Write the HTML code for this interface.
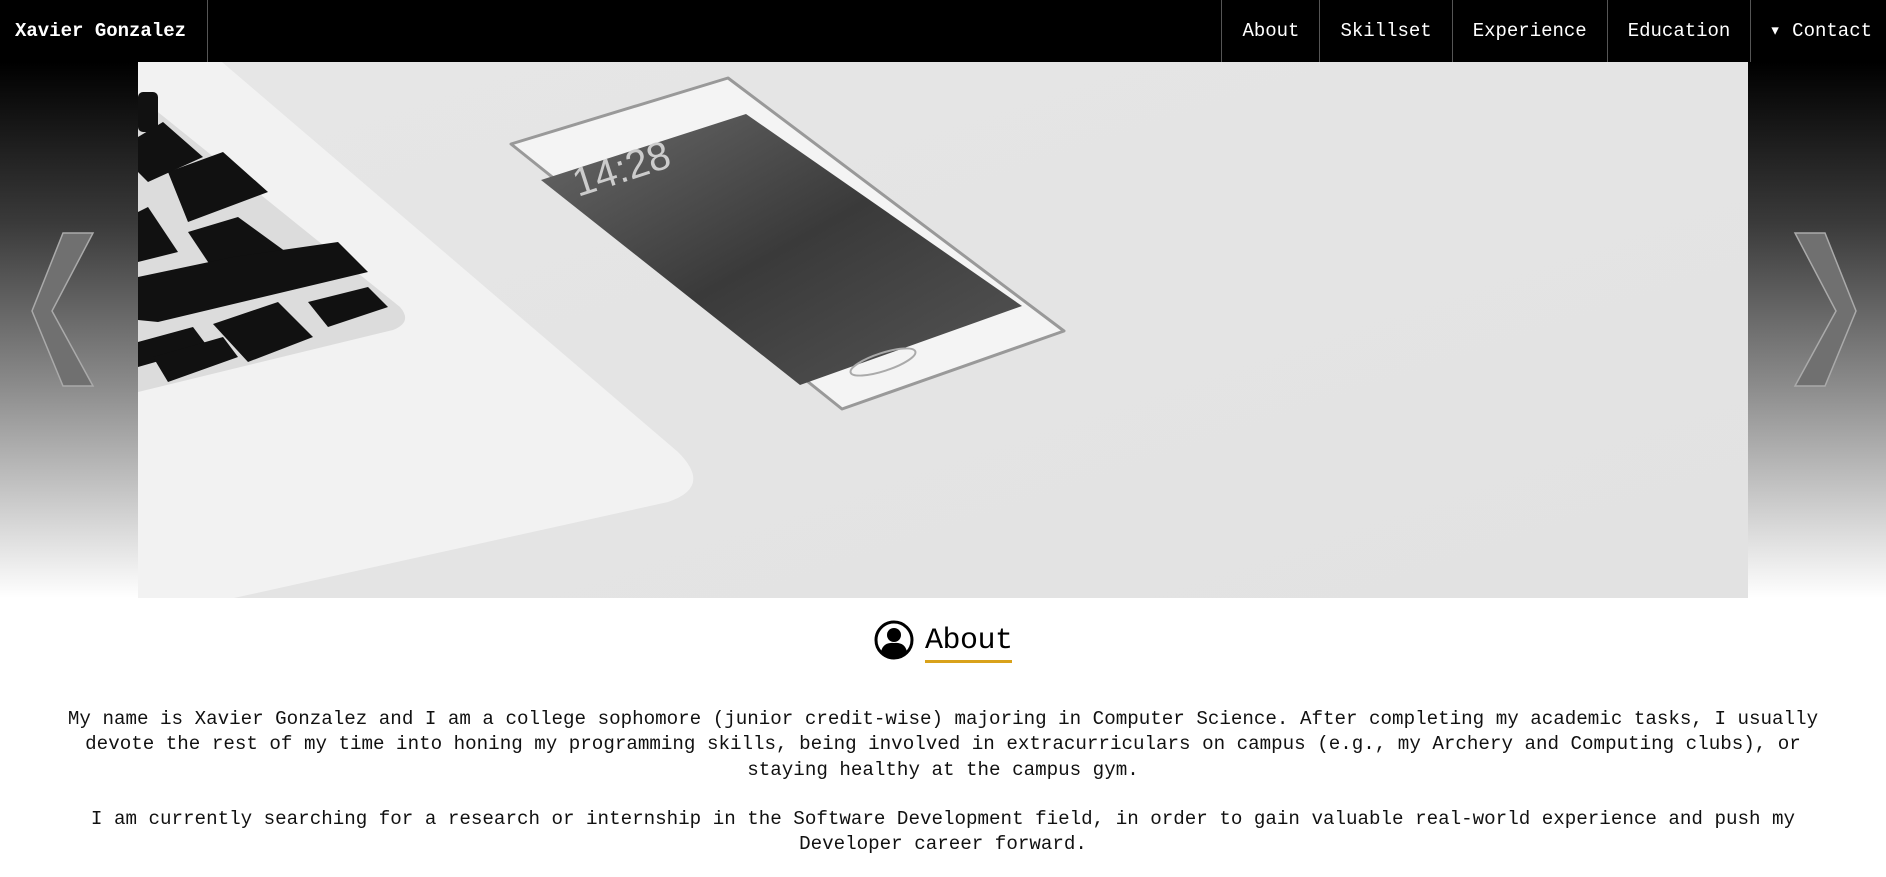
<!DOCTYPE html>
<html><head><meta charset="utf-8"><style>
*{margin:0;padding:0;box-sizing:border-box}
body{width:1886px;height:877px;overflow:hidden;background:#fff;font-family:"Liberation Mono",monospace}
nav{position:absolute;left:0;top:0;width:1886px;height:62px;background:#000;color:#fff;font-size:19px}
.brand{position:absolute;left:0;top:0;width:208px;height:62px;border-right:1px solid #555;font-weight:bold;line-height:62px;padding-left:15px}
.links{position:absolute;right:0;top:0;height:62px;display:flex}
.links a{display:block;height:62px;line-height:62px;padding:0 20px;color:#fff;text-decoration:none;border-left:1px solid #555}
.hero{position:absolute;left:0;top:62px;width:1886px;height:536px;background:linear-gradient(#000 0%,#3a3a3a 30%,#8a8a8a 60%,#fff 100%)}
.img{position:absolute;left:138px;top:0}
h2{position:absolute;left:925px;top:623px;font-size:30px;font-weight:normal;line-height:36px;border-bottom:3px solid #d9a21b;width:87px;height:40px;letter-spacing:-0.5px}
.icon{position:absolute;left:874px;top:620px}
p{position:absolute;left:0;width:1886px;text-align:center;font-size:19.2px;line-height:25.3px;color:#111;white-space:nowrap}
</style></head><body>
<nav><div class="brand">Xavier Gonzalez</div>
<div class="links"><a>About</a><a>Skillset</a><a>Experience</a><a>Education</a><a style="padding-left:18px;padding-right:14px">&#9662; Contact</a></div></nav>
<div class="hero">
<svg style="position:absolute;left:30px;top:169px" width="70" height="160" viewBox="0 0 70 160">
<polygon points="33,2 63,2 22,80 63,155 33,155 2,80" fill="#707070" stroke="#aaa" stroke-width="1.5"/></svg>
<svg style="position:absolute;left:1788px;top:169px" width="70" height="160" viewBox="0 0 70 160">
<polygon points="37,2 7,2 48,80 7,155 37,155 68,80" fill="#707070" stroke="#aaa" stroke-width="1.5"/></svg>
<svg class="img" width="1610" height="536" viewBox="0 0 1610 536">
<defs><linearGradient id="bg" x1="0" y1="0" x2="1" y2="1"><stop offset="0" stop-color="#e6e6e6"/><stop offset="1" stop-color="#e2e2e2"/></linearGradient>
<linearGradient id="sc" x1="0" y1="0" x2="1" y2="1"><stop offset="0" stop-color="#6a6a6a"/><stop offset="0.5" stop-color="#3a3a3a"/><stop offset="1" stop-color="#555"/></linearGradient></defs>
<rect width="1610" height="536" fill="url(#bg)"/>
<path d="M0,0 L84,0 L540,390 Q575,425 530,440 L96,536 L0,536 Z" fill="#f2f2f2"/>
<path d="M0,34 L262,245 Q275,260 255,268 L0,330 Z" fill="#dcdcdc"/>
<g fill="#111">
<rect x="0" y="30" width="20" height="40" rx="5"/>
<polygon points="0,75 25,60 65,95 10,120 0,110"/>
<polygon points="30,110 85,90 130,130 50,160"/>
<polygon points="0,150 10,145 40,190 0,200"/>
<polygon points="50,170 100,155 155,195 80,215"/>
<polygon points="0,215 95,195 200,180 230,210 20,260 0,258"/>
<polygon points="75,262 140,240 175,275 110,300"/>
<polygon points="170,240 230,225 250,245 190,265"/>
<polygon points="0,280 55,265 70,285 0,305"/>
<polygon points="15,295 85,275 100,295 30,320"/>
</g>
<polygon points="373,82 590,16 926,269 704,347" fill="#f4f4f4" stroke="#999" stroke-width="3" stroke-linejoin="round"/>
<polygon points="403,118 608,52 884,244 662,323" fill="url(#sc)"/>
<text x="440" y="135" fill="#ccc" font-size="40" font-family="Liberation Sans" transform="rotate(-18 440 135)">14:28</text>
<ellipse cx="745" cy="300" rx="34" ry="9" fill="none" stroke="#aaa" stroke-width="2" transform="rotate(-18 745 300)"/>
</svg>
</div>
<svg class="icon" width="40" height="40" viewBox="0 0 40 40"><circle cx="20" cy="20" r="18" fill="none" stroke="#000" stroke-width="3"/><circle cx="20" cy="15" r="7" fill="#000"/><path d="M7,32 Q9,22 20,23 Q31,22 33,32 Q27,38 20,38 Q13,38 7,32Z" fill="#000"/></svg>
<h2>About</h2>
<p style="top:707px">My name is Xavier Gonzalez and I am a college sophomore (junior credit-wise) majoring in Computer Science. After completing my academic tasks, I usually<br>devote the rest of my time into honing my programming skills, being involved in extracurriculars on campus (e.g., my Archery and Computing clubs), or<br>staying healthy at the campus gym.</p>
<p style="top:807px">I am currently searching for a research or internship in the Software Development field, in order to gain valuable real-world experience and push my<br>Developer career forward.</p>
</body></html>
